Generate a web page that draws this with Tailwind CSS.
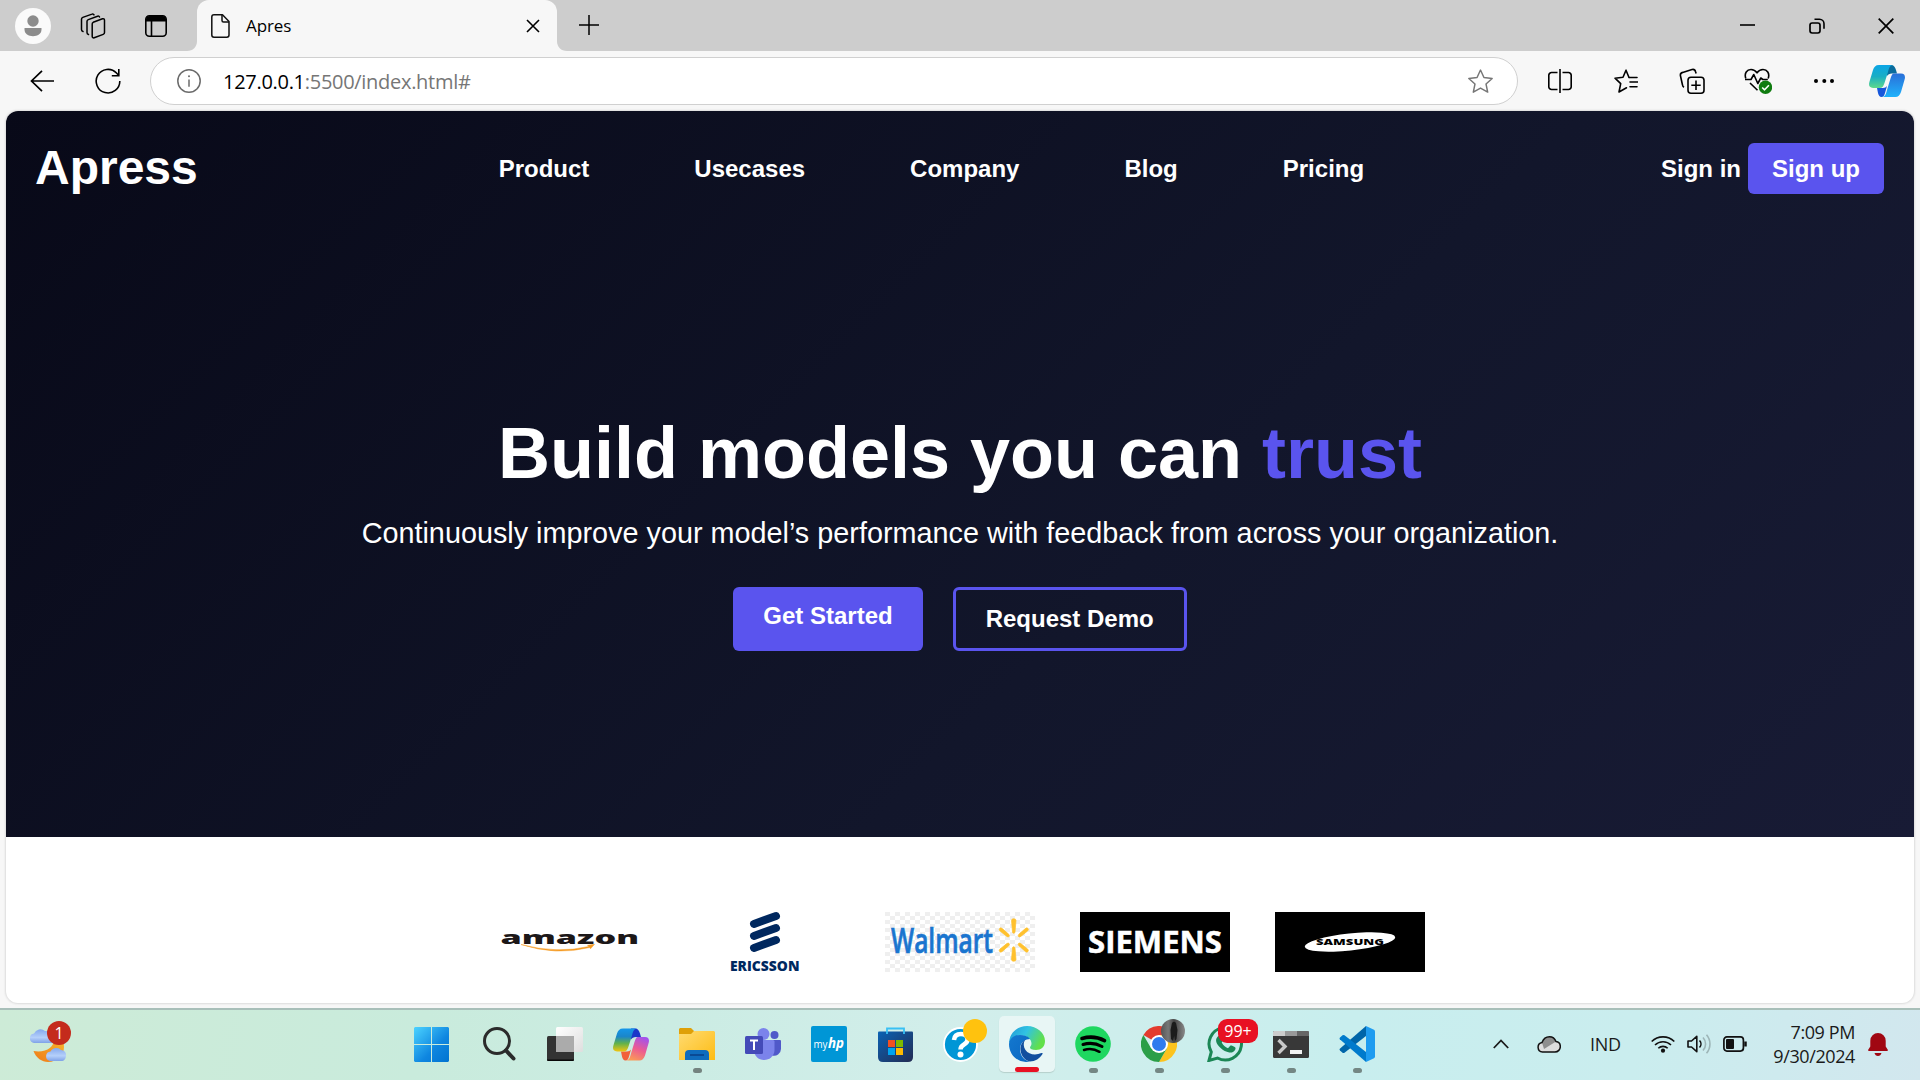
<!DOCTYPE html>
<html lang="en">
<head>
<meta charset="utf-8">
<title>Apres</title>
<script src="https://cdn.jsdelivr.net/npm/@tailwindcss/browser@4"></script>
</head>
<body class="w-[1920px] h-[1080px] overflow-hidden flex flex-col bg-[#f7f7f7] font-['Open_Sans',sans-serif] text-black">

<!-- Tab strip -->
<div class="h-[51px] shrink-0 bg-[#cdcdcd] flex items-center">
  <div class="w-[66px] flex justify-center shrink-0">
    <svg class="w-9 h-9" viewBox="0 0 36 36"><circle cx="18" cy="18" r="18" fill="#fafafa"/><circle cx="18" cy="13" r="5.7" fill="#8c8c8c"/><path d="M9.500 20h17v1.500c0 4.500-4 6.700-8.500 6.700s-8.500-2.200-8.500-6.700z" fill="#8c8c8c"/></svg>
  </div>
  <div class="w-[54px] flex justify-center shrink-0">
    <svg class="w-[26px] h-[26px]" viewBox="0 0 26 26" fill="none" stroke="#000" stroke-width="1.500" stroke-linejoin="round" stroke-linecap="round"><path d="M13.200 9.300l9.300-3.500a1.500 1.500 0 0 1 2 1.400v12.300a2 2 0 0 1-1.300 1.900l-9 3.400a1.500 1.500 0 0 1-2-1.400V11.200a2 2 0 0 1 1-1.900z"/><path d="M8.500 21.500a2 2 0 0 1-1.500-2V8.500a2 2 0 0 1 1.300-1.900L17.500 3.200a1.500 1.500 0 0 1 2 .8"/><path d="M3 18.500a2 2 0 0 1-1.500-2V6.300A2 2 0 0 1 2.800 4.400l9.200-3.300a1.500 1.500 0 0 1 2 .8"/></svg>
  </div>
  <div class="w-[77px] flex justify-center shrink-0 pr-[6px]">
    <svg class="w-[22px] h-[22px]" viewBox="0 0 22 22" fill="none" stroke="#000" stroke-width="1.600"><rect x=".8" y=".8" width="20.400" height="20.400" rx="3.500"/><path d="M1 6.500V4.500Q1 1 4.500 1h13Q21 1 21 4.500v2z" fill="#000" stroke="none"/><path d="M6.500 6v15"/></svg>
  </div>
  <div class="relative w-[360px] h-full shrink-0 bg-[#f7f7f7] rounded-t-[12px] flex items-center pl-[14px] pr-[17px]">
    <svg class="absolute -left-[10px] bottom-0 w-[10px] h-[10px]" viewBox="0 0 10 10"><path d="M10 0v10H0C6 10 10 6 10 0z" fill="#f7f7f7"/></svg>
    <svg class="absolute -right-[10px] bottom-0 w-[10px] h-[10px]" viewBox="0 0 10 10"><path d="M0 0v10h10C4 10 0 6 0 0z" fill="#f7f7f7"/></svg>
    <svg class="w-[19px] h-[24px]" viewBox="0 0 19 24" fill="none" stroke="#111" stroke-width="1.500" stroke-linejoin="round"><path d="M3 .8h8.500L18 7.500V21a2.200 2.200 0 0 1-2.200 2.200H3A2.200 2.200 0 0 1 .8 21V3A2.200 2.200 0 0 1 3 .8z"/><path d="M11 1v5.500A1.500 1.500 0 0 0 12.500 8H18"/></svg>
    <span class="ml-[16px] text-[17px] tracking-[-0.1px] leading-none">Apres</span>
    <svg class="ml-auto w-[14px] h-[14px]" viewBox="0 0 14 14" stroke="#000" stroke-width="1.600"><path d="M1 1l12 12M13 1L1 13"/></svg>
  </div>
  <svg class="ml-[21px] -mt-[2px] w-[22px] h-[22px]" viewBox="0 0 22 22" stroke="#000" stroke-width="1.500"><path d="M11 1v20M1 11h20"/></svg>
  <div class="ml-auto flex items-center">
    <div class="w-[69px] flex justify-center"><svg class="w-[15px] h-[15px]" viewBox="0 0 15 15" stroke="#000" stroke-width="1.600"><path d="M0 7h15"/></svg></div>
    <div class="w-[69px] flex justify-center"><svg class="w-4 h-4" viewBox="0 0 16 16" fill="none" stroke="#000" stroke-width="1.700"><rect x="1" y="5" width="10" height="10" rx="2.200"/><path d="M5.500 1.300h5a4.500 4.500 0 0 1 4.500 4.500v5" stroke-width="1.600"/></svg></div>
    <div class="w-[69px] flex justify-center"><svg class="w-4 h-4" viewBox="0 0 16 16" stroke="#000" stroke-width="1.700"><path d="M.7.700l14.600 14.600M15.300.7L.7 15.300"/></svg></div>
  </div>
</div>

<!-- Toolbar -->
<div class="h-[60px] shrink-0 flex items-center">
  <div class="w-[75px] flex justify-center pl-[8px]"><svg class="w-6 h-[22px]" viewBox="0 0 24 22" fill="none" stroke="#000" stroke-width="1.700"><path d="M12 .8L1.500 11 12 21.200M1.500 11H24"/></svg></div>
  <div class="w-[75px] flex justify-center pr-[9px]"><svg class="w-[26px] h-[26px]" viewBox="0 0 26 26" fill="none" stroke="#000" stroke-width="1.600"><path d="M24.800 13A11.800 11.800 0 1 1 21.500 5L23.800 7.500"/><path d="M23.800 1v6.700h-7"/></svg></div>
  <div class="w-[1368px] h-12 shrink-0 bg-white border-[1.500px] border-[#d0d0d0] rounded-full flex items-center pl-[26px] pr-[24px]">
    <svg class="w-6 h-6" viewBox="0 0 24 24" fill="none" stroke="#6b6b6b" stroke-width="1.500"><circle cx="12" cy="12" r="11.200"/><path d="M12 10.500v7.300"/><circle cx="12" cy="7.200" r="1" fill="#6b6b6b" stroke="none"/></svg>
    <span class="ml-[22px] mt-px text-[20px] leading-none tracking-[-0.290px] text-[#767676]"><span class="text-black">127.0.0.1</span>:5500/index.html#</span>
    <svg class="ml-auto w-[25px] h-[25px]" viewBox="0 0 24 24" fill="none" stroke="#767676" stroke-width="1.400" stroke-linejoin="round"><path d="M12 1l3.300 7.200 7.900.9-5.900 5.300 1.600 7.800L12 18.300l-6.900 3.900 1.600-7.800L.8 9.100l7.900-.9z"/></svg>
  </div>
  <div class="ml-[9px] flex items-center">
    <div class="w-[66px] flex justify-center"><svg class="w-6 h-6" viewBox="0 0 24 24" fill="none" stroke="#000" stroke-width="1.600"><path d="M9.500 3.500H3.800a2.800 2.800 0 0 0-3 3v11a2.800 2.800 0 0 0 3 3h5.700M14.500 3.500h5.700a2.800 2.800 0 0 1 3 3v11a2.800 2.800 0 0 1-3 3h-5.700M12 0v24"/></svg></div>
    <div class="w-[66px] flex justify-center"><svg class="w-6 h-6" viewBox="0 0 24 24" fill="none" stroke="#000" stroke-width="1.600" stroke-linejoin="round" stroke-linecap="round"><path d="M15 8.500L12 1.200 9 8.300l-8 .9 5.700 5.400L5 23l7.500-4.200"/><path d="M15.500 8.500H23M16 13h7.500M16 17.800h7"/></svg></div>
    <div class="w-[66px] flex justify-center"><svg class="w-[26px] h-[26px]" viewBox="0 0 26 26" fill="none" stroke="#000" stroke-width="1.600"><path d="M5 19.200A3 3 0 0 1 3.500 17L1.500 8a3 3 0 0 1 2.200-3.600L13 1.500a3 3 0 0 1 3.600 2.200l.5 1.800"/><rect x="9" y="9.200" width="16" height="16" rx="3"/><path d="M17 12.500v9.400M12.300 17.200h9.400"/></svg></div>
    <div class="w-[66px] flex justify-center"><svg class="w-[28px] h-[26px]" viewBox="0 0 28 26" fill="none" stroke="#000" stroke-width="1.600" stroke-linejoin="round"><path d="M1.800 10.500C0 5 3 1.500 7 1.500c2.500 0 4.500 1.200 6 3.300 1.500-2.100 3.500-3.300 6-3.300 4 0 7 3.500 5.200 9M6 15l7.500 7.300"/><path d="M1 11.500h6l2.800-5 4 9 3-5.500 2 1.500h5"/><circle cx="21.500" cy="19.300" r="6.700" fill="#107c10" stroke="none"/><path d="M18.200 19.500l2.400 2.300 4.300-4.500" stroke="#fff"/></svg></div>
    <div class="w-[66px] flex justify-center"><svg class="w-5 h-1" viewBox="0 0 20 4"><circle cx="2" cy="2" r="2"/><circle cx="10.300" cy="2" r="2"/><circle cx="18" cy="2" r="2"/></svg></div>
    <div class="w-[60px] flex justify-center">
      <svg class="w-9 h-8" viewBox="0 0 36 32"><defs><linearGradient id="e1" x1="0" y1="0" x2="0" y2="1"><stop stop-color="#0ba5e6"/><stop offset=".5" stop-color="#1aaec4"/><stop offset="1" stop-color="#5fd98b"/></linearGradient><linearGradient id="e2" x1="0" y1="0" x2="0" y2="1"><stop stop-color="#2a6fd8"/><stop offset="1" stop-color="#1fb2fb"/></linearGradient></defs><path d="M18 0h4c3 0 4 2 5 5l1 3.500h-5c-2.500 0-4 1-5 2.500z" fill="#0a6c9c"/><path d="M8 23h6c2 0 3-1 4-2l-2 7c-.8 2.500-1.500 4-3.500 4s-3-2-3.500-4z" fill="#1757db"/><path d="M10 0h14c-3 0-4 3-5 7l-3.500 11c-1 3-2 5-5 5H4c-4 0-4.500-3-3.600-6L4 5c1-3 2.500-5 6-5z" fill="url(#e1)"/><path d="M25 8.500h7c4 0 4.500 3 3.600 6L32 27c-1 3-3 5-5.500 5H13c3 0 4-3 5-7l3.500-11.500c1-3 1.500-5 3.500-5z" fill="url(#e2)"/></svg>
    </div>
  </div>
</div>

<!-- Web page -->
<div class="mx-[6px] h-[892px] shrink-0 rounded-[12px] overflow-hidden bg-white shadow-[0_0_2px_1px_#dcdcdc] flex flex-col font-['Liberation_Sans',Arial,sans-serif]">
  <section class="h-[726px] shrink-0 bg-[linear-gradient(135deg,#080918,#12162b_60%,#181b35)] text-white px-[30px] pt-[30px] flex flex-col">
    <header class="h-[55px] flex items-center justify-between font-bold text-2xl">
      <div class="text-[48px] leading-[55px] -ml-px pb-[2px]">Apress</div>
      <nav class="flex gap-[105px] pl-[4px]"><a>Product</a><a>Usecases</a><a>Company</a><a>Blog</a><a>Pricing</a></nav>
      <div class="flex items-center gap-[7px]"><a>Sign in</a><a class="h-[51px] px-6 rounded-[6px] bg-[#5a54ee] flex items-center">Sign up</a></div>
    </header>
    <h1 class="mt-[216px] text-center text-[72px] leading-[82px] font-bold">Build models you can <span class="text-[#5a54ee]">trust</span></h1>
    <p class="mt-[23px] text-center text-[28.8px] leading-[32px]">Continuously improve your model’s performance with feedback from across your organization.</p>
    <div class="mt-[38px] h-16 flex justify-center gap-[30px] font-bold text-2xl leading-[28px]">
      <a class="bg-[#5a54ee] rounded-[6px] px-[30px] pt-[15px]">Get Started</a>
      <a class="border-[3px] border-[#5a54ee] rounded-[6px] px-[30px] pt-[15px]">Request Demo</a>
    </div>
  </section>
  <section class="pt-[75px] flex justify-center gap-[45px]">
    <svg class="w-[150px] h-[60px]" viewBox="0 0 150 60"><text x="5.500" y="31.500" font-family="Open Sans" font-weight="800" font-size="17" textLength="138.500" lengthAdjust="spacingAndGlyphs" fill="#1c1718">amazon</text><path d="M26 32.500Q62 42 94 34.500l-1.500-1.200 7-1-4 4.500-.8-1.300Q61 44 26 32.500z" fill="#f59a22" stroke="#f59a22" stroke-width=".5"/></svg>
    <svg class="w-[150px] h-[60px] overflow-visible" viewBox="0 0 150 60"><g stroke="#00285f" stroke-width="8" stroke-linecap="round"><path d="M64 12l22-8M64 24l22-8M64 36l22-8"/></g><text x="40" y="59.300" font-family="Open Sans" font-weight="800" font-size="13.200" textLength="69.500" lengthAdjust="spacingAndGlyphs" fill="#00285f">ERICSSON</text></svg>
    <svg class="w-[150px] h-[60px]" viewBox="0 0 150 60"><defs><pattern id="chk" width="10" height="8" patternUnits="userSpaceOnUse"><path d="M0 0h5v4H0zM5 4h5v4H5z" fill="#efefef"/></pattern></defs><rect width="150" height="60" fill="url(#chk)"/><text x="6" y="40.500" font-family="Open Sans" font-weight="600" font-size="34" textLength="102" lengthAdjust="spacingAndGlyphs" fill="#1a75cf" stroke="#1a75cf" stroke-width=".7">Walmart</text><g fill="#ffc12e" stroke="#ffc12e" stroke-width=".7"><path d="M126.500 8.500q0-1.800 2.200-1.800t2.300 1.800l-1 11.500q-.2 1.300-1.300 1.300t-1.200-1.300z"/><path d="M126.500 47.500q0 1.800 2.200 1.800t2.300-1.800l-1-11.500q-.2-1.300-1.300-1.300t-1.200 1.300z"/><path d="M114.800 16.200q-1.300 1.500.2 2.800l6.800 5.400q1.500 1 2.300.1t-.3-2.200l-6.500-5.700q-1.500-1.300-2.500-.4z"/><path d="M142.800 16.200q1.300 1.500-.2 2.800l-6.800 5.400q-1.500 1-2.300.1t.3-2.200l6.500-5.700q1.500-1.300 2.500-.4z"/><path d="M114.800 39.800q-1.300-1.500.2-2.800l6.800-5.400q1.500-1 2.300-.1t-.3 2.200l-6.500 5.700q-1.500 1.300-2.500.4z"/><path d="M142.800 39.800q1.300-1.500-.2-2.800l-6.800-5.400q-1.500-1-2.300-.1t.3 2.200l6.500 5.700q1.500 1.300 2.500.4z"/></g></svg>
    <svg class="w-[150px] h-[60px] bg-black" viewBox="0 0 150 60"><text x="8" y="41" font-family="Open Sans" font-weight="700" font-size="31" textLength="134" lengthAdjust="spacingAndGlyphs" fill="#fff" stroke="#fff" stroke-width=".5">SIEMENS</text></svg>
    <svg class="w-[150px] h-[60px] bg-black" viewBox="0 0 150 60"><ellipse cx="75" cy="30" rx="45.500" ry="8.500" fill="#fff" transform="rotate(-6 75 30)"/><text x="41" y="33.300" font-family="Open Sans" font-weight="800" font-size="9.500" textLength="68" lengthAdjust="spacingAndGlyphs" fill="#000">SAMSUNG</text></svg>
  </section>
</div>

<!-- Taskbar -->
<div class="mt-[5px] h-[72px] shrink-0 border-t-2 border-[#a8bfb9] bg-[linear-gradient(100deg,#cdebd7,#c9ebdc_22%,#cbece3_35%,#d2eeeb_50%,#c8eeee_70%,#caedee_85%,#d2e7ee)] flex items-center pb-[2px] text-[#1a1a1a]">
  <div class="w-[398px] shrink-0 flex pl-[30px] pb-[5px]">
    <div class="relative">
      <svg class="w-[42px] h-[42px]" viewBox="0 0 42 42"><defs><linearGradient id="cl" x1="0" y1="0" x2="0" y2="1"><stop stop-color="#84a8ee"/><stop offset=".6" stop-color="#b5d0fa"/><stop offset="1" stop-color="#7fa2e8"/></linearGradient><linearGradient id="mn" x1="1" y1="0" x2="0" y2="1"><stop stop-color="#f8b62d"/><stop offset="1" stop-color="#ee7a17"/></linearGradient></defs><path d="M24 19c0 7-8 13-20.500 11C6 37 12 41 18 41c9 0 16-7 16-15 0-3-1-6-3-8z" fill="url(#mn)"/><path d="M4 22a4.800 4.800 0 0 1 0-9.500A7 7 0 0 1 15 10a9 9 0 0 1 9 12z" fill="url(#cl)"/><path d="M20 40a4.800 4.800 0 0 1 .5-9.500A6.500 6.500 0 0 1 31 29c3 0 5.500 3 5 5 0 4-2 6-4.500 6z" fill="url(#cl)"/></svg>
      <span class="absolute left-[17px] top-0 w-6 h-6 rounded-full bg-[#c42b1c] text-white text-[16px] leading-6 text-center">1</span>
    </div>
  </div>
  <div class="flex h-full items-center shrink-0">
    <div class="w-[68px] pr-[2px] flex justify-center"><svg class="w-[35px] h-[35px]" viewBox="0 0 35 35"><defs><linearGradient id="w" gradientUnits="userSpaceOnUse" x1="0" y1="0" x2="35" y2="35"><stop stop-color="#4cd3ff"/><stop offset=".6" stop-color="#0e86e0"/><stop offset="1" stop-color="#0073d0"/></linearGradient></defs><path d="M1 0h16v17H0V1zM18 0h16l1 1v16H18zM0 18h17v17H1l-1-1zM18 18h17v16l-1 1H18z" fill="url(#w)"/></svg></div>
    <div class="w-[66px] flex justify-center"><svg class="w-[34px] h-[36px]" viewBox="0 0 34 36" fill="none" stroke="#2b2b2b"><circle cx="15" cy="15" r="12.500" stroke-width="3"/><path d="M24 24.500l7.500 8" stroke-width="4" stroke-linecap="round"/></svg></div>
    <div class="w-[66px] flex justify-center"><svg class="w-9 h-[34px]" viewBox="0 0 36 34"><defs><linearGradient id="tv" x1="0" y1="0" x2="1" y2="1"><stop stop-color="#fff"/><stop offset="1" stop-color="#dedede"/></linearGradient></defs><rect y="9" width="27" height="25" rx="1.500" fill="#333"/><path d="M0 32.500h27q0 1.500-1.500 1.500h-24Q0 34 0 32.500z" fill="#080808"/><rect x="9" width="27" height="25" rx="1.500" fill="url(#tv)"/><path d="M9 9h18v16H9z" fill="#ababab"/></svg></div>
    <div class="w-[66px] flex justify-center"><svg class="w-9 h-[33px]" viewBox="0 0 36 32"><defs><linearGradient id="c1" x1="0" y1="0" x2="0" y2="1"><stop stop-color="#1596ea"/><stop offset=".35" stop-color="#1b86c9"/><stop offset=".65" stop-color="#62b24b"/><stop offset="1" stop-color="#f2c510"/></linearGradient><linearGradient id="c2" x1=".7" y1="0" x2=".3" y2="1"><stop stop-color="#a352ec"/><stop offset=".5" stop-color="#ec5b92"/><stop offset="1" stop-color="#fb9b55"/></linearGradient></defs><path d="M18 0h4c3 0 4 2 5 5l1 3.500h-5c-2.500 0-4 1-5 2.500z" fill="#1c36c9"/><path d="M8 23h6c2 0 3-1 4-2l-2 7c-.8 2.500-1.500 4-3.500 4s-3-2-3.500-4z" fill="#f2603a"/><path d="M10 0h14c-3 0-4 3-5 7l-3.500 11c-1 3-2 5-5 5H4c-4 0-4.500-3-3.600-6L4 5c1-3 2.500-5 6-5z" fill="url(#c1)"/><path d="M25 8.500h7c4 0 4.500 3 3.600 6L32 27c-1 3-3 5-5.500 5H13c3 0 4-3 5-7l3.500-11.500c1-3 1.500-5 3.500-5z" fill="url(#c2)"/></svg></div>
    <div class="relative w-[66px] h-full flex justify-center items-center"><svg class="w-9 h-[34px]" viewBox="0 0 36 34"><defs><linearGradient id="f" x1="0" y1="0" x2="1" y2="1"><stop stop-color="#ffdb72"/><stop offset="1" stop-color="#fdbc14"/></linearGradient></defs><path d="M1 1h11l3 3v6H0V2z" fill="#dfa008"/><path d="M0 7h12l3-3h20l1 1v28H0z" fill="url(#f)"/><path d="M6 33v-6q0-4 4-4h16q4 0 4 4v6z" fill="#0f6cbd"/><path d="M11 28h14" stroke="#0a4a94" stroke-width="2"/></svg><i class="absolute bottom-[5px] w-[9px] h-[5px] rounded-full bg-[#74837f]"></i></div>
    <div class="w-[66px] flex justify-center"><svg class="w-9 h-8" viewBox="0 0 36 32"><circle cx="29.500" cy="7" r="4" fill="#5059c9"/><path d="M25 12h10q1 0 1 1v8a7 7 0 0 1-9 6.500z" fill="#5059c9"/><circle cx="18.500" cy="6" r="6" fill="#7b83eb"/><path d="M11 12h17q1.500 0 1.500 1.500V22c0 6-5 10-10.500 10S9 28 9 22z" fill="#7b83eb"/><rect y="8" width="18" height="18" rx="1.500" fill="#444ab8"/><path d="M5 12.500h8M9 12.500V22" stroke="#fff" stroke-width="2"/></svg></div>
    <div class="w-[66px] flex justify-center"><div class="w-9 h-9 rounded-[2px] bg-[#0096d6]"><svg class="w-9 h-9" viewBox="0 0 36 36" fill="#fff"><text x="2.500" y="21.500" font-family="Open Sans" font-size="11" textLength="14" lengthAdjust="spacingAndGlyphs">my</text><text x="17" y="21.500" font-family="Open Sans" font-size="15" font-style="italic" font-weight="bold" textLength="16" lengthAdjust="spacingAndGlyphs">hp</text></svg></div></div>
    <div class="w-[66px] flex justify-center"><svg class="w-[35px] h-[35px]" viewBox="0 0 35 35"><defs><linearGradient id="st" x1="0" y1="0" x2="1" y2="1"><stop stop-color="#0a62b4"/><stop offset="1" stop-color="#232b52"/></linearGradient></defs><path d="M0 5.500q0-1 1-1h33q1 0 1 1V30q0 5-5 5H5q-5 0-5-5z" fill="url(#st)"/><path d="M9 7V1.500h17V7" fill="none" stroke="#39c0f4" stroke-width="1.800"/><path d="M10 13h7v7h-7z" fill="#f25022"/><path d="M18 13h7v7h-7z" fill="#7fba00"/><path d="M10 21h7v7h-7z" fill="#00a4ef"/><path d="M18 21h7v7h-7z" fill="#ffb900"/></svg></div>
    <div class="relative w-[66px] flex justify-center"><svg class="w-9 h-9" viewBox="0 0 36 36"><circle cx="17.500" cy="18.500" r="16.500" fill="#0096d6" stroke="#fff" stroke-width="1.800"/><path d="M11 14q.5-6 7-6t6.500 5.500q0 3-3.500 5t-3.500 5" fill="none" stroke="#fff" stroke-width="4.500"/><circle cx="17.500" cy="28.500" r="3" fill="#fff"/></svg><i class="absolute left-[35px] -top-[7px] w-6 h-6 rounded-full bg-[#ffc20e]"></i></div>
    <div class="w-[66px] flex justify-center"><div class="relative w-14 h-14 rounded-[5px] bg-[#e8f6f5] shadow-[0_1px_1px_#b5cfcb] flex items-center justify-center"><svg class="w-9 h-9" viewBox="0 0 36 36"><defs><linearGradient id="g1" x1="0" y1="0" x2="1" y2=".4"><stop stop-color="#1f97d6"/><stop offset=".5" stop-color="#31c3e3"/><stop offset="1" stop-color="#62e04a"/></linearGradient><linearGradient id="g2" x1="0" y1="0" x2="1" y2="1"><stop stop-color="#1478cf"/><stop offset="1" stop-color="#0a67c2"/></linearGradient></defs><path d="M0 18C0 7 8 0 18 0s18 7 18 15c0 6-4 9-9 9-4 0-6-1-6-2.500 0-1 1.500-1.500 1.500-4 0-4-4-8-10-8S1.500 13 0 18z" fill="url(#g1)"/><path d="M0 18c1-6 5-9 11-9 4 0 8 1 10 4-4 0-10 3-10 10s5 12 10 12.500C8 38 0 28 0 18z" fill="url(#g2)"/><path d="M16 14c-3 2-5 6-4.500 10 .5 6 5 11 9.500 11.500 5 0 10-3 12.500-7.500.4-.8-.2-1.300-1-.9-6 2.700-13 1.500-16-3-2-3-2.500-7-.5-10.100z" fill="#114e9e"/></svg><i class="absolute bottom-0 w-6 h-[5px] rounded-full bg-[#e81123]"></i></div></div>
    <div class="relative w-[66px] h-full flex justify-center items-center"><svg class="w-9 h-9" viewBox="0 0 36 36" fill="none" stroke="#000" stroke-linecap="round"><circle cx="18" cy="18" r="17.800" fill="#1ed760" stroke="none"/><path d="M7 12.500q12-3.500 22.500 2.200" stroke-width="3.600"/><path d="M8 18.500q10-3 19 2" stroke-width="3"/><path d="M9 24q8-2.500 15.500 1.800" stroke-width="2.500"/></svg><i class="absolute bottom-[5px] w-[9px] h-[5px] rounded-full bg-[#748784]"></i></div>
    <div class="relative w-[66px] h-full flex justify-center items-center"><svg class="w-9 h-9" viewBox="0 0 36 36"><path d="M18 18L2.400 9A18 18 0 0 1 33.600 9z" fill="#e33b2e"/><path d="M18 9h15.600A18 18 0 0 1 18 36l7.800-13.500z" fill="#fcc31e"/><path d="M2.400 9A18 18 0 0 0 18 36l7.800-13.500H10.200z" fill="#2b9e48"/><circle cx="18" cy="18" r="9" fill="#fff"/><circle cx="18" cy="18" r="7" fill="#2f7bee"/></svg><svg class="absolute left-[35px] top-[9px] w-6 h-6" viewBox="0 0 24 24"><defs><linearGradient id="ph"><stop stop-color="#555"/><stop offset=".3" stop-color="#777"/><stop offset=".55" stop-color="#444"/><stop offset="1" stop-color="#8a8a8a"/></linearGradient></defs><circle cx="12" cy="12" r="12" fill="url(#ph)"/><path d="M11 4q2-2.500 4 0l1.500 7-1 9-1.500 2-.8-5-1.200 5-2-2-.5-9z" fill="#1b1b1b"/></svg><i class="absolute bottom-[5px] w-[9px] h-[5px] rounded-full bg-[#748784]"></i></div>
    <div class="relative w-[66px] h-full flex justify-center items-center"><svg class="w-9 h-9" viewBox="0 0 36 36"><path d="M2 34.500l2.300-8.500A16.200 16.200 0 1 1 10.500 32z" fill="none" stroke="#1b8755" stroke-width="3"/><path d="M12 9.500c1-.6 2-.3 2.500.7l1.500 3.300c.4 1-.2 1.700-1.300 3 1.500 3 3.500 4.600 6.300 5.700l2-2.300c.5-.6 1-.6 1.700-.3l3 1.500c1 .5 1 1.200.6 2.300-.9 2.400-3.600 3.600-6 3.100-6.500-1.300-11.500-6.200-13-10.500-.9-2.800.6-5.300 2.700-6.500z" fill="#1b8755"/></svg><span class="absolute left-[26px] top-[9px] w-10 h-6 rounded-[9px] bg-[#e81123] text-white text-[16px] leading-6 text-center">99+</span><i class="absolute bottom-[5px] w-[9px] h-[5px] rounded-full bg-[#748784]"></i></div>
    <div class="relative w-[66px] h-full flex justify-center items-center"><svg class="w-9 h-[27px]" viewBox="0 0 36 27"><rect width="36" height="27" rx="1.500" fill="#383838"/><path d="M1 0h11v5H0V1z" fill="#ccc"/><path d="M12 0h12v5H12z" fill="#999"/><path d="M24 0h11l1 1v4H24z" fill="#666"/><path d="M5.500 9l6.500 6.500L5.500 22" fill="none" stroke="#c8c8c8" stroke-width="3.400"/><path d="M17 19h12v4H17z" fill="#f2f2f2"/></svg><i class="absolute bottom-[5px] w-[9px] h-[5px] rounded-full bg-[#748784]"></i></div>
    <div class="relative w-[66px] h-full flex justify-center items-center"><svg class="w-9 h-9" viewBox="0 0 36 36"><path d="M1 24.500l2.500 2.300q1 .6 2 0L27 10V0L.8 22.800q-.7.8.2 1.700z" fill="#0065a9"/><path d="M1 11.500l2.500-2.300q1-.6 2 0L27 26v10L.8 13.200q-.7-.8.2-1.700z" fill="#007acc"/><path d="M27 36l8-3.800q1-.5 1-1.700V5.500q0-1.200-1-1.700L27 0z" fill="#1f9cf0"/></svg><i class="absolute bottom-[5px] w-[9px] h-[5px] rounded-full bg-[#748784]"></i></div>
  </div>
  <div class="ml-auto flex items-center h-full pr-[32px]">
    <svg class="w-4 h-[10px]" viewBox="0 0 16 10" fill="none" stroke="#1a1a1a" stroke-width="1.800"><path d="M.8 9L8 1.500 15.200 9"/></svg>
    <svg class="ml-[28px] w-6 h-[17px]" viewBox="0 0 24 17"><path d="M5.500 16a4.800 4.800 0 0 1-.5-9.500C6.500 2.500 9 .8 12.500.8S18 3 19 5.500c3 .3 4.300 2.800 4.300 5A5.300 5.300 0 0 1 18 16z" fill="#ddd"/><path d="M5 6.500C6.500 2.500 9 .8 12.500.8S18 3 19 5.500L7 13z" fill="#8e8e8e"/><path d="M5.500 16a4.800 4.800 0 0 1-.5-9.500C6.500 2.500 9 .8 12.500.8S18 3 19 5.500c3 .3 4.300 2.800 4.300 5A5.300 5.300 0 0 1 18 16z" fill="none" stroke="#111" stroke-width="1.500"/></svg>
    <span class="ml-[29px] w-[61px] text-[18px] tracking-[-0.300px]">IND</span>
    <svg class="w-6 h-[18px]" viewBox="0 0 24 18" fill="none" stroke="#111" stroke-width="1.600"><path d="M.7 6.500a16 16 0 0 1 22.600 0M4 10a11.400 11.400 0 0 1 16 0M7.300 13.300a6.700 6.700 0 0 1 9.400 0"/><circle cx="12" cy="15.700" r="2.100" fill="#111" stroke="none"/></svg>
    <svg class="ml-3 w-6 h-5" viewBox="0 0 24 20" fill="none" stroke="#111" stroke-width="1.600" stroke-linejoin="round"><path d="M1 7v6h3.500l5.300 4.700V2.300L4.500 7zM12.500 6.500a5 5 0 0 1 0 7"/><path d="M16 3.500a9.500 9.500 0 0 1 0 13M19.500 .800a14 14 0 0 1 0 18.400" stroke="#9db5b7"/></svg>
    <svg class="ml-3 w-6 h-4" viewBox="0 0 24 16" fill="none" stroke="#111" stroke-width="1.700"><rect x=".9" y=".9" width="19.500" height="14.200" rx="3"/><rect x="3" y="3" width="8" height="10" rx="1" fill="#111" stroke="none"/><path d="M22.500 5.500v5" stroke-width="2.500"/></svg>
    <div class="ml-[20px] w-[88px] shrink-0 text-right text-[18px] leading-[24px] tracking-[-0.400px] whitespace-nowrap">7:09 PM<br>9/30/2024</div>
    <svg class="ml-[13px] w-5 h-[23px]" viewBox="0 0 20 23" fill="#a00712"><path d="M10 0a7.700 7.700 0 0 1 7.700 7.700v5.800l2.100 3.300q.4 1.200-.8 1.200H1q-1.200 0-.8-1.200l2.100-3.300V7.700A7.700 7.700 0 0 1 10 0zM6.500 20h7q-.8 3-3.500 3t-3.500-3z"/></svg>
  </div>
</div>
</body>
</html>
